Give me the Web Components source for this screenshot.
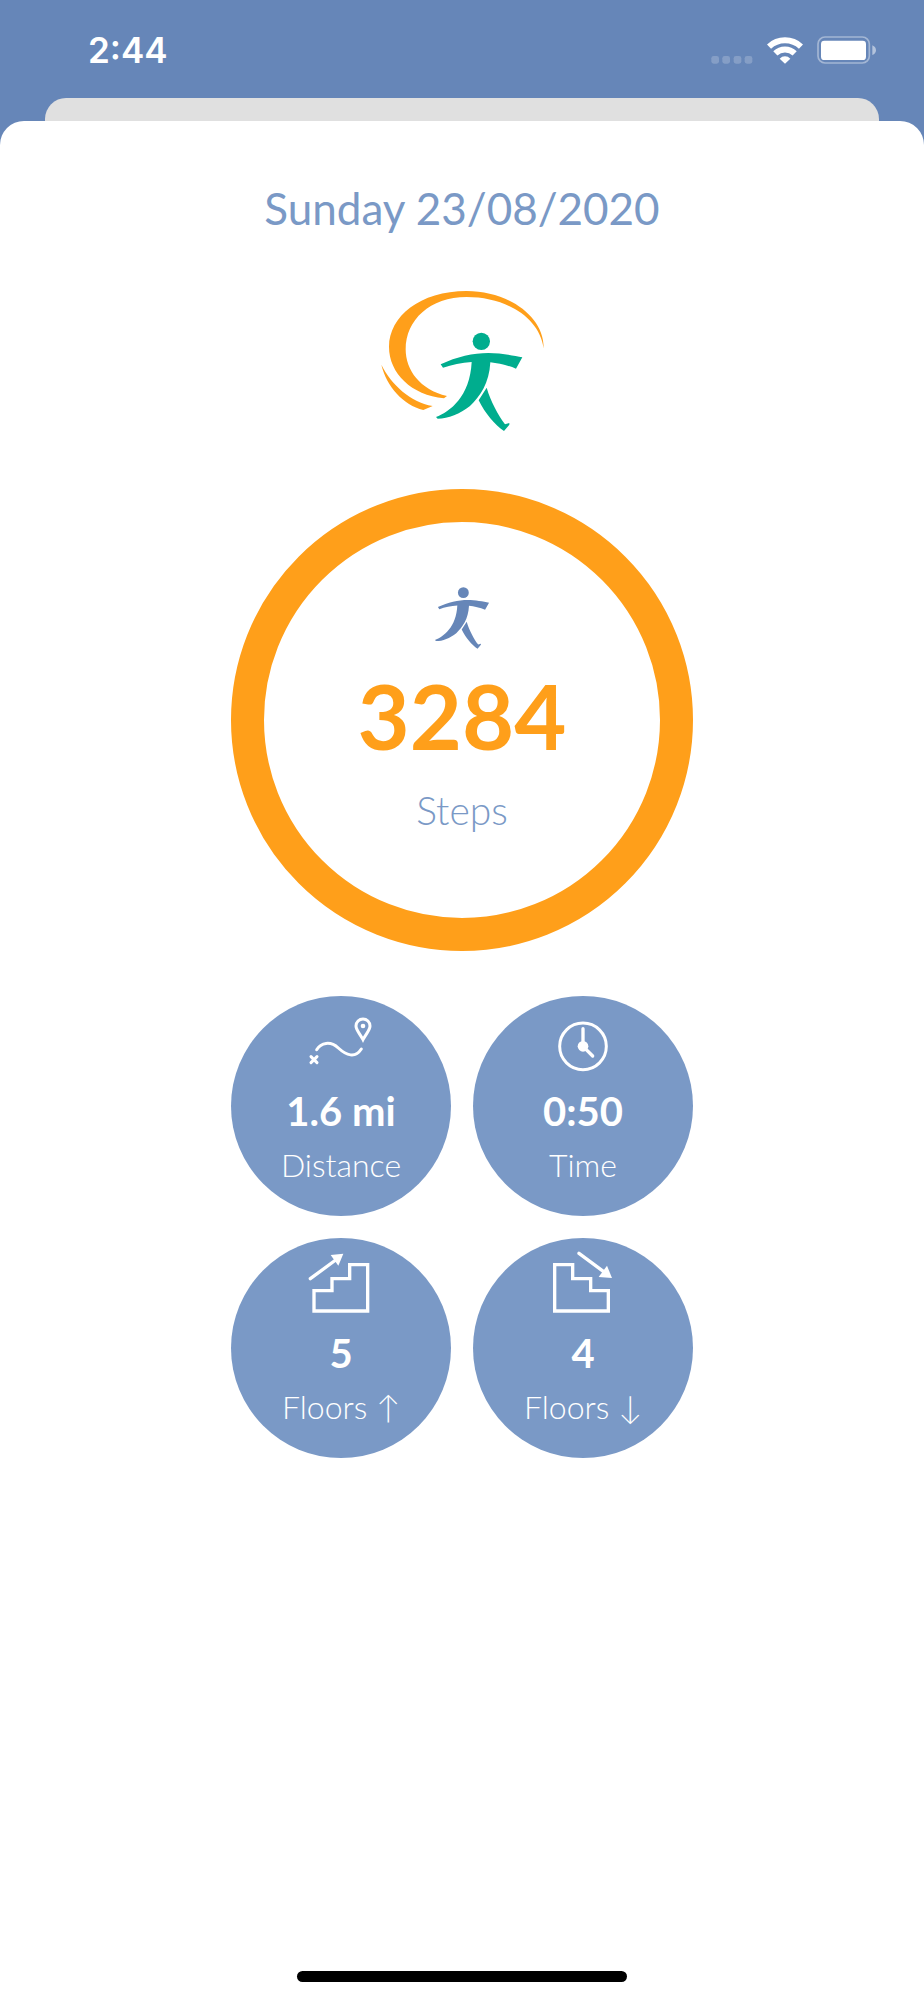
<!DOCTYPE html>
<html lang="en">
<head>
  <meta charset="utf-8">
  <meta name="viewport" content="width=device-width, initial-scale=1">
  <title>Daily steps</title>
  <style>
    body {
      --bar: #6686b8;
      --blue: #7a99c6;
      --orange: #ff9f1a;
      --green: #00ad8e;
      margin: 0;
      background-color: var(--bar);
      font-family: Lato, "Liberation Sans", sans-serif;
    }
  </style>
</head>
<body>
  <steps-app></steps-app>

  <script>
    const walker = `
      <circle cx="334" cy="184" r="26"/>
      <path d="M212 253C260 230 310 219 355 219C390 219 430 226 457 232L438 266C415 256 385 250 361 247C358 310 330 350 300 378C270 402 235 416 203 416L198 411C240 395 300 350 305 246C275 248 245 255 219 263Z"/>
      <path d="M350 323C362 365 385 405 405 433L418 429V434L402 453C375 435 345 400 326 361Z"/>`;

    const icons = {
      distance: `
        <g fill="none" stroke="currentColor" stroke-width="9" stroke-linecap="round">
          <path d="M18 146L36 164M36 146L18 164"/>
          <path d="M35 125C48 104 76 98 100 120S150 152 169 123"/>
          <path d="M174 95C164 76 153 66 153 54A21 21 0 1 1 195 54C195 66 184 76 174 95Z"/>
        </g>
        <circle cx="174" cy="54" r="7"/>`,
      time: `
        <circle cx="108" cy="115" r="70" fill="none" stroke="currentColor" stroke-width="9"/>
        <circle cx="108" cy="115" r="16"/>
        <path d="M108 62V115L137 144" fill="none" stroke="currentColor" stroke-width="10" stroke-linecap="round"/>`,
      up: `
        <path d="M27 183V122H81V86H134V44H188V183Z" fill="none" stroke="currentColor" stroke-width="10"/>
        <path d="M16 86L92 30" stroke="currentColor" stroke-width="10" stroke-linecap="round"/>
        <path d="M115 11L77 15L100 47Z"/>`,
      down: `
        <path d="M23 183V44H77V86H131V122H184V183Z" fill="none" stroke="currentColor" stroke-width="10"/>
        <path d="M96 10L170 65" stroke="currentColor" stroke-width="10" stroke-linecap="round"/>
        <path d="M195 84L180 47L155 81Z"/>`,
    };

    class StatusBar extends HTMLElement {
      constructor() {
        super();
        this.shadowDOM = this.attachShadow({ mode: 'open' });
      }

      connectedCallback() {
        this.render();
      }

      render() {
        this.shadowDOM.innerHTML = `
          <style>
            :host {
              display: flex;
              justify-content: space-between;
              align-items: center;
              padding: 28px 48px 26px 88px;
              color: white;
            }

            time {
              font: 600 35px/44px Inter, "Liberation Sans", sans-serif;
            }

            .indicators {
              display: flex;
              align-items: flex-end;
              gap: 14px;
            }

            svg {
              display: block;
              fill: currentColor;
            }
          </style>

          <time><slot></slot></time>
          <div class="indicators">
            <svg width="42" height="8" viewBox="0 0 126 24" opacity=".2" aria-label="No signal">
              <rect x="1" width="23" height="23" rx="7"/>
              <rect x="34" width="23" height="23" rx="7"/>
              <rect x="68" width="23" height="23" rx="7"/>
              <rect x="101" width="23" height="23" rx="7"/>
            </svg>
            <svg width="36" height="27" viewBox="0 0 108 81" aria-label="Wi-Fi">
              <path d="M6 29A70 70 0 0 1 102 29M25 49A42 42 0 0 1 83 49" fill="none" stroke="currentColor" stroke-width="18"/>
              <path d="M54 80L38 65A22 22 0 0 1 70 65Z"/>
            </svg>
            <svg width="59" height="28" viewBox="0 0 177 84" aria-label="Battery full">
              <rect x="3" y="3" width="154" height="78" rx="21" fill="none" stroke="currentColor" stroke-width="5" opacity=".4"/>
              <rect x="12" y="14" width="135" height="58" rx="10"/>
              <path d="M166 28Q177 33 177 43T166 57Z" opacity=".5"/>
            </svg>
          </div>`;
      }
    }

    class StepsLogo extends HTMLElement {
      constructor() {
        super();
        this.shadowDOM = this.attachShadow({ mode: 'open' });
      }

      connectedCallback() {
        this.render();
      }

      render() {
        this.shadowDOM.innerHTML = `
          <style>
            :host {
              display: block;
            }

            svg {
              display: block;
              fill: var(--green);
            }

            .swoosh {
              fill: var(--orange);
            }
          </style>

          <svg width="190" height="160" viewBox="-9 0 570 480" aria-hidden="true">
            <path class="swoosh" d="M521 205C523 110 415 33 290 33C150 33 57 110 57 200C57 280 125 345 222 355L231 348C150 330 107 270 107 208C107 120 180 51 290 51C405 51 508 110 521 205Z"/>
            <path class="swoosh" d="M34 254C50 320 100 375 160 390L188 378C120 365 65 315 34 254Z"/>
            ${walker}
          </svg>`;
      }
    }

    class StepRing extends HTMLElement {
      constructor() {
        super();
        this.shadowDOM = this.attachShadow({ mode: 'open' });
      }

      connectedCallback() {
        this.render();
      }

      render() {
        this.shadowDOM.innerHTML = `
          <style>
            :host {
              display: flex;
              flex-direction: column;
              align-items: center;
              box-sizing: border-box;
              width: 462px;
              height: 462px;
              padding-top: 65px;
              border: 33px solid var(--orange);
              border-radius: 50%;
            }

            svg {
              fill: var(--bar);
              margin-bottom: 12px;
            }

            .count {
              color: var(--orange);
              font-size: 90px;
              font-weight: bold;
              line-height: 108px;
              margin-bottom: 18px;
            }

            .label {
              color: var(--blue);
              font-size: 39px;
              font-weight: 300;
              line-height: 46px;
            }
          </style>

          <svg width="60" height="62" viewBox="184 157 287 297" aria-hidden="true">${walker}</svg>
          <span class="count"><slot></slot></span>
          <span class="label">${this.getAttribute('label')}</span>`;
      }
    }

    class StatBadge extends HTMLElement {
      constructor() {
        super();
        this.shadowDOM = this.attachShadow({ mode: 'open' });
      }

      connectedCallback() {
        this.render();
      }

      render() {
        this.shadowDOM.innerHTML = `
          <style>
            :host {
              display: flex;
              flex-direction: column;
              align-items: center;
              box-sizing: border-box;
              width: 220px;
              height: 220px;
              padding-top: 12px;
              border-radius: 50%;
              background-color: var(--blue);
              color: white;
            }

            svg {
              fill: currentColor;
              margin-bottom: 13px;
            }

            .value {
              font-size: 40px;
              font-weight: bold;
              line-height: 52px;
            }

            .label {
              font-size: 32px;
              font-weight: 300;
              line-height: 56px;
            }
          </style>

          <svg width="72" height="64" viewBox="0 0 216 192" aria-hidden="true">${icons[this.getAttribute('icon')]}</svg>
          <span class="value"><slot></slot></span>
          <span class="label">${this.getAttribute('label')}</span>`;
      }
    }

    class StepsApp extends HTMLElement {
      constructor() {
        super();
        this.shadowDOM = this.attachShadow({ mode: 'open' });
      }

      connectedCallback() {
        this.render();
      }

      render() {
        this.shadowDOM.innerHTML = `
          <style>
            :host {
              display: flex;
              flex-direction: column;
              min-height: 100vh;
            }

            .back-sheet {
              height: 23px;
              margin: 0 45px;
              border-radius: 21px 21px 0 0;
              background-color: #e0e0e0;
            }

            main {
              flex: 1;
              display: flex;
              flex-direction: column;
              align-items: center;
              padding: 61px 16px 18px;
              border-radius: 24px 24px 0 0;
              background-color: white;
            }

            h1 {
              margin: 0 0 46px;
              color: var(--blue);
              font-size: 44px;
              font-weight: normal;
              line-height: 52px;
            }

            steps-logo {
              margin-bottom: 49px;
            }

            .stats {
              display: grid;
              grid-template-columns: auto auto;
              gap: 22px;
              margin: 45px 0;
            }

            .home {
              width: 330px;
              height: 11px;
              margin-top: auto;
              border-radius: 6px;
              background-color: black;
            }
          </style>

          <status-bar>2:44</status-bar>
          <div class="back-sheet"></div>
          <main>
            <h1>Sunday 23/08/2020</h1>
            <steps-logo></steps-logo>
            <step-ring label="Steps">3284</step-ring>
            <section class="stats">
              <stat-badge icon="distance" label="Distance">1.6 mi</stat-badge>
              <stat-badge icon="time" label="Time">0:50</stat-badge>
              <stat-badge icon="up" label="Floors ↑">5</stat-badge>
              <stat-badge icon="down" label="Floors ↓">4</stat-badge>
            </section>
            <div class="home"></div>
          </main>`;
      }
    }

    customElements.define('status-bar', StatusBar);
    customElements.define('steps-logo', StepsLogo);
    customElements.define('step-ring', StepRing);
    customElements.define('stat-badge', StatBadge);
    customElements.define('steps-app', StepsApp);
  </script>
</body>
</html>
